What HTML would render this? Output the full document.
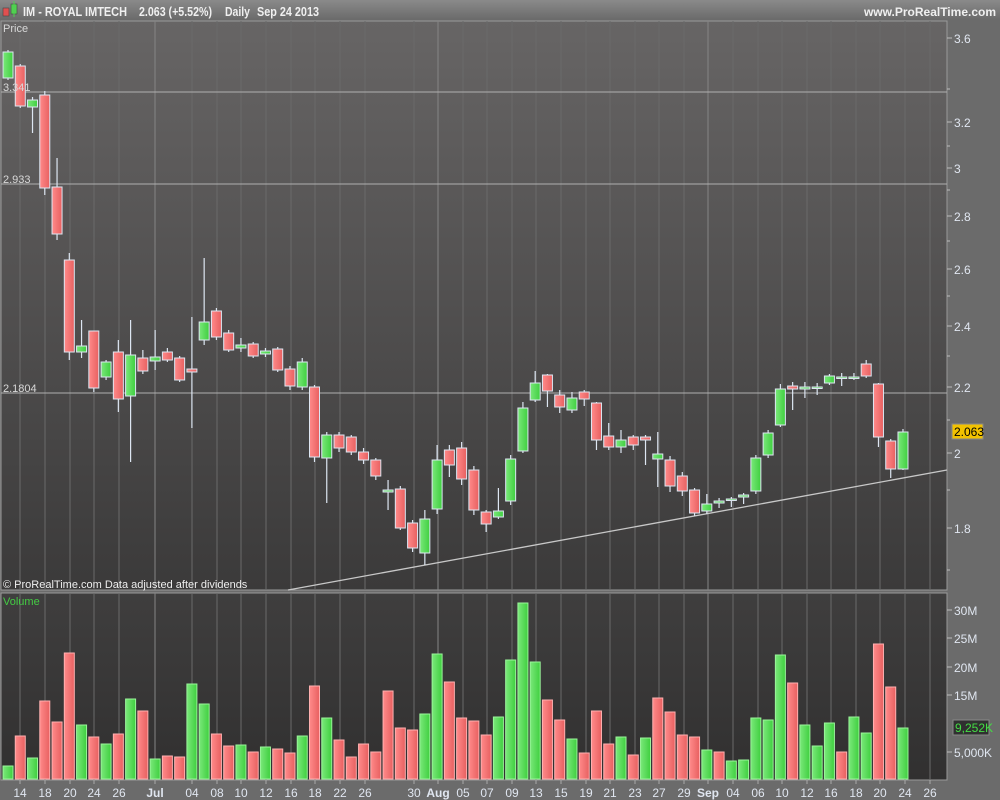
<!DOCTYPE html>
<html><head><meta charset="utf-8"><style>
html,body{margin:0;padding:0;width:1000px;height:800px;overflow:hidden;background:#6b6b6b;font-family:"Liberation Sans",sans-serif}
svg{display:block}
</style></head><body>
<svg id="s" width="1000" height="800" xmlns="http://www.w3.org/2000/svg" font-family="Liberation Sans, sans-serif">
<defs>
<linearGradient id="pg" x1="0" y1="0" x2="0" y2="1"><stop offset="0" stop-color="#676565"/><stop offset="1" stop-color="#3b3a3a"/></linearGradient>
<linearGradient id="vg" x1="0" y1="0" x2="0" y2="1"><stop offset="0" stop-color="#3f3e3e"/><stop offset="1" stop-color="#313030"/></linearGradient>
<linearGradient id="hg" x1="0" y1="0" x2="0" y2="1"><stop offset="0" stop-color="#8a8a8a"/><stop offset="1" stop-color="#6a6a6a"/></linearGradient>
<linearGradient id="gr" x1="0" y1="0" x2="1" y2="0"><stop offset="0" stop-color="#7ae87a"/><stop offset="1" stop-color="#3fcf3f"/></linearGradient>
<linearGradient id="rd" x1="0" y1="0" x2="1" y2="0"><stop offset="0" stop-color="#ff8a8a"/><stop offset="1" stop-color="#e86060"/></linearGradient>
</defs>
<rect x="0" y="0" width="1000" height="20" fill="url(#hg)"/>
<rect x="0" y="20" width="1000" height="780" fill="#6b6b6b"/>
<rect x="1" y="21" width="946" height="569" fill="url(#pg)" stroke="#9a9a9a"/>
<rect x="1" y="593" width="946" height="187" fill="url(#vg)" stroke="#9a9a9a"/>
<g id="grid"></g>
<g id="c"></g>
<rect x="3" y="8" width="6" height="8" fill="#e05050" stroke="#444" stroke-width="0.6"/>
<rect x="11" y="4" width="6" height="10" fill="#50d050" stroke="#444" stroke-width="0.6"/>
<line x1="14" y1="1" x2="14" y2="17" stroke="#50d050"/>
<text x="23" y="16" font-size="13" font-weight="bold" fill="#f0f0f0" textLength="104" lengthAdjust="spacingAndGlyphs">IM - ROYAL IMTECH</text>
<text x="139" y="16" font-size="13" font-weight="bold" fill="#f0f0f0" textLength="73" lengthAdjust="spacingAndGlyphs">2.063 (+5.52%)</text>
<text x="225" y="16" font-size="13" font-weight="bold" fill="#f0f0f0" textLength="25" lengthAdjust="spacingAndGlyphs">Daily</text>
<text x="257" y="16" font-size="13" font-weight="bold" fill="#f0f0f0" textLength="62" lengthAdjust="spacingAndGlyphs">Sep 24 2013</text>
<text x="996" y="16" font-size="12" font-weight="bold" fill="#f0f0f0" text-anchor="end">www.ProRealTime.com</text>
<text x="3" y="32" font-size="11" fill="#d8d8d8">Price</text>
<text x="3" y="91" font-size="11" fill="#d8d8d8">3.341</text>
<text x="3" y="183" font-size="11" fill="#d8d8d8">2.933</text>
<text x="3" y="392" font-size="11" fill="#d8d8d8">2.1804</text>
<text x="3" y="588" font-size="11" fill="#eeeeee">© ProRealTime.com  Data adjusted after dividends</text>
<text x="3" y="605" font-size="11" fill="#44cc44">Volume</text>
<g id="ax" font-size="12" fill="#e0e6f0"></g>
<rect x="952" y="424" width="31" height="15" fill="#f2c200" stroke="#888"/>
<text x="954" y="436" font-size="12" fill="#000">2.063</text>
<rect x="953" y="720" width="36" height="15" fill="#303030" stroke="#888"/>
<text x="955" y="732" font-size="12" fill="#44dd44">9,252K</text>
</svg>
<script>
var NS="http://www.w3.org/2000/svg";
function el(p,t,a,txt){var e=document.createElementNS(NS,t);for(var k in a)e.setAttribute(k,a[k]);if(txt)e.textContent=txt;document.getElementById(p).appendChild(e);return e;}
var dates=[[20,"14"],[45,"18"],[70,"20"],[94,"24"],[119,"26"],[155,"Jul",1],[192,"04"],[217,"08"],[241,"10"],[266,"12"],[291,"16"],[315,"18"],[340,"22"],[365,"26"],[414,"30"],[438,"Aug",1],[463,"05"],[487,"07"],[512,"09"],[536,"13"],[561,"15"],[586,"19"],[610,"21"],[635,"23"],[659,"27"],[684,"29"],[708,"Sep",1],[733,"04"],[758,"06"],[782,"10"],[807,"12"],[831,"16"],[856,"18"],[880,"20"],[905,"24"],[930,"26"]];
dates.forEach(function(d){
 var c=d[2]?"#858585":"#6a6a6a";
 el("grid","line",{x1:d[0],y1:21,x2:d[0],y2:590,stroke:c});
 el("grid","line",{x1:d[0],y1:593,x2:d[0],y2:780,stroke:c});
 el("grid","line",{x1:d[0],y1:780,x2:d[0],y2:784,stroke:"#aaa"});
 var t=el("ax","text",{x:d[0],y:797,"text-anchor":"middle"},d[1]);
 if(d[2])t.setAttribute("font-weight","bold");
});
[92,184,393].forEach(function(y){el("grid","line",{x1:1,y1:y,x2:947,y2:y,stroke:"#b0b0b0"});});
el("grid","line",{x1:288,y1:590,x2:947,y2:470,stroke:"#c8c8c8","stroke-width":1.3});
[[38,"3.6"],[122,"3.2"],[168,"3"],[216,"2.8"],[269,"2.6"],[326,"2.4"],[387,"2.2"],[453,"2"],[528,"1.8"]].forEach(function(a){
 el("ax","line",{x1:947,y1:a[0],x2:952,y2:a[0],stroke:"#bbb"});
 el("ax","text",{x:954,y:a[0]+5},a[1]);});
[[89],[146],[190],[241],[296],[356],[420],[490],[570]].forEach(function(a){el("ax","line",{x1:947,y1:a[0],x2:950,y2:a[0],stroke:"#bbb"});});
[[610,"30M"],[638,"25M"],[667,"20M"],[695,"15M"],[752,"5,000K"]].forEach(function(a){
 el("ax","line",{x1:947,y1:a[0],x2:952,y2:a[0],stroke:"#bbb"});
 el("ax","text",{x:954,y:a[0]+5},a[1]);});
var C=[[52,78,"g",50,80],[66,106,"r",64,108],[100,107,"g",97,133],[95,188,"r",91,195],[187,234,"r",158,240],[260,352,"r",253,360],[346,352,"g",320,358],[331,388,"r",331,392],[362,377,"g",360,380],[352,399,"r",340,412],[355,396,"g",320,462],[358,371,"r",350,374],[357,361,"g",330,370],[352,360,"r",348,362],[358,380,"r",356,382],[369,372,"r",317,428],[322,340,"g",258,345],[311,337,"r",308,340],[333,350,"r",330,352],[345,348,"g",338,352],[344,356,"r",342,358],[351,354,"g",348,357],[349,370,"r",347,372],[369,386,"r",366,390],[362,387,"g",358,390],[387,457,"r",385,462],[435,458,"g",432,503],[435,448,"r",432,452],[437,452,"r",435,455],[452,460,"r",448,464],[460,476,"r",458,480],[490,492,"g",480,510],[489,528,"r",486,530],[523,548,"r",520,552],[519,553,"g",510,565],[460,509,"g",445,514],[450,465,"r",445,477],[448,479,"r",442,485],[470,510,"r",466,515],[512,524,"r",510,532],[511,517,"g",488,519],[459,501,"g",455,505],[408,451,"g",402,453],[383,400,"g",371,402],[375,391,"r",374,407],[395,407,"r",390,413],[398,410,"g",392,413],[392,399,"r",390,406],[403,440,"r",402,450],[436,447,"r",423,450],[440,447,"g",430,453],[437,445,"r",435,450],[437,440,"r",435,465],[454,459,"g",432,487],[460,486,"r",456,492],[476,491,"r",472,496],[490,513,"r",488,516],[504,511,"g",494,514],[501,503,"g",498,508],[499,500,"g",497,507],[495,497,"g",493,504],[458,491,"g",455,494],[433,455,"g",430,458],[389,425,"g",384,427],[386,389,"r",382,410],[387,389,"g",382,398],[387,388,"g",383,395],[376,383,"g",374,385],[377,378,"g",373,386],[377,378,"g",373,380],[364,376,"r",360,378],[384,437,"r",383,447],[441,469,"r",439,478],[432,469,"g",429,470]];
var V=[[766,"g"],[736,"r"],[758,"g"],[701,"r"],[722,"r"],[653,"r"],[725,"g"],[737,"r"],[744,"g"],[734,"r"],[699,"g"],[711,"r"],[759,"g"],[756,"r"],[757,"r"],[684,"g"],[704,"g"],[734,"r"],[746,"r"],[745,"g"],[752,"r"],[747,"g"],[749,"r"],[753,"r"],[736,"g"],[686,"r"],[718,"g"],[740,"r"],[757,"r"],[744,"r"],[752,"r"],[691,"r"],[728,"r"],[730,"r"],[714,"g"],[654,"g"],[682,"r"],[718,"r"],[721,"r"],[735,"r"],[717,"g"],[660,"g"],[603,"g"],[662,"g"],[700,"r"],[720,"r"],[739,"g"],[753,"r"],[711,"r"],[744,"r"],[737,"g"],[755,"r"],[738,"g"],[698,"r"],[712,"r"],[735,"r"],[737,"r"],[750,"g"],[752,"r"],[761,"g"],[760,"g"],[718,"g"],[720,"g"],[655,"g"],[683,"r"],[725,"g"],[746,"g"],[723,"g"],[752,"r"],[717,"g"],[733,"g"],[644,"r"],[687,"r"],[728,"g"]];
function X(i){return 8+i*12.26;}
C.forEach(function(c,i){var x=X(i);
 el("c","line",{x1:x,y1:c[3],x2:x,y2:c[4],stroke:"#dde6f2","stroke-width":1.2});
 var h=Math.max(c[1]-c[0],1.5);
 el("c","rect",{x:x-5,y:c[0],width:10,height:h,fill:c[2]=="g"?"url(#gr)":"url(#rd)",stroke:"#dde6f2","stroke-width":1});
});
V.forEach(function(v,i){var x=X(i);
 el("c","rect",{x:x-5,y:v[0],width:10,height:779-v[0],fill:v[1]=="g"?"url(#gr)":"url(#rd)",stroke:v[1]=="g"?"#9af59a":"#ffb0b0","stroke-width":1});
});
</script>
</body></html>
